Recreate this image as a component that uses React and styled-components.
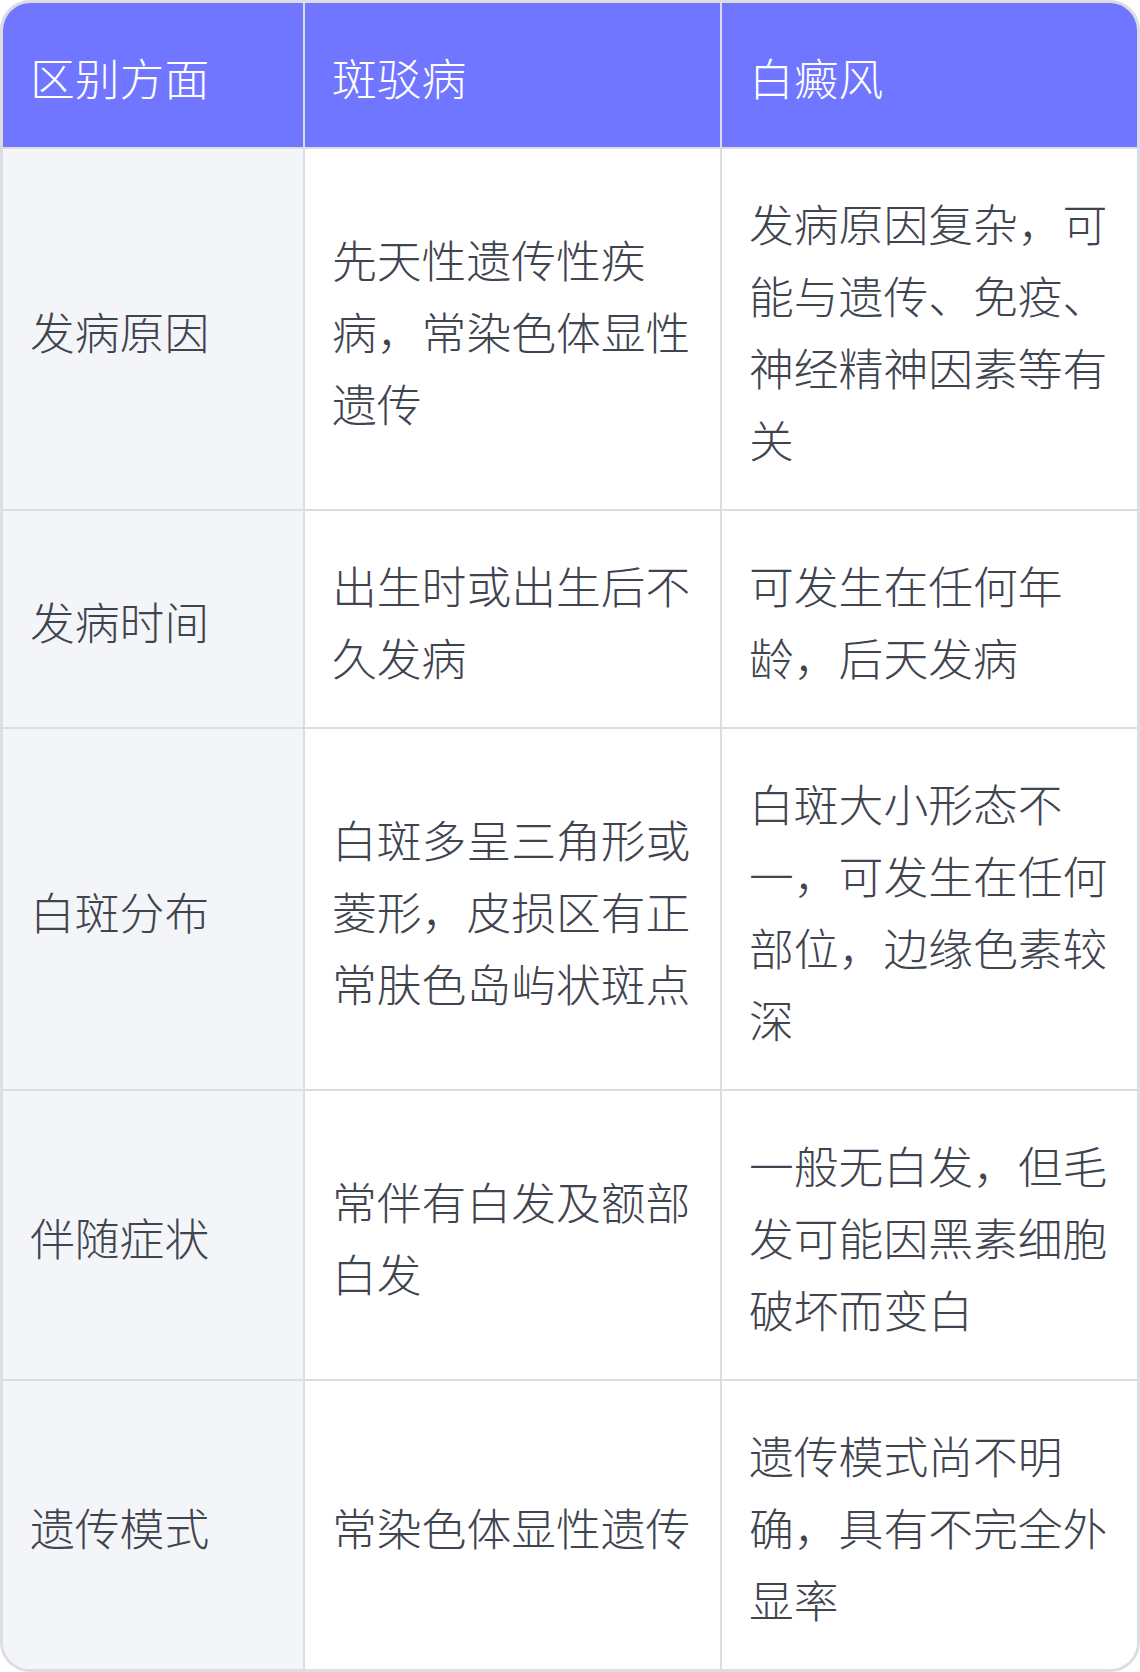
import styled, { createGlobalStyle } from 'styled-components'

const rows = [
  ['发病原因', '先天性遗传性疾病，常染色体显性遗传', '发病原因复杂，可能与遗传、免疫、神经精神因素等有关'],
  ['发病时间', '出生时或出生后不久发病', '可发生在任何年龄，后天发病'],
  ['白斑分布', '白斑多呈三角形或菱形，皮损区有正常肤色岛屿状斑点', '白斑大小形态不一，可发生在任何部位，边缘色素较深'],
  ['伴随症状', '常伴有白发及额部白发', '一般无白发，但毛发可能因黑素细胞破坏而变白'],
  ['遗传模式', '常染色体显性遗传', '遗传模式尚不明确，具有不完全外显率'],
]

const GlobalStyle = createGlobalStyle`
  body {
    margin: 0;
    background: #ffffff;
    font-family: "Noto Sans CJK SC", "Noto Sans", sans-serif;
  }
`

export default function App() {
  return (
    <>
      <GlobalStyle />
      <Frame>
        <Table>
          <colgroup>
            <col style={{ width: 302 }} />
            <col style={{ width: 417 }} />
            <col />
          </colgroup>
          <thead>
            <tr>
              <HeadCell>区别方面</HeadCell>
              <HeadCell>斑驳病</HeadCell>
              <HeadCell>白癜风</HeadCell>
            </tr>
          </thead>
          <tbody>
            {rows.map(([aspect, piebald, vitiligo]) => (
              <tr key={aspect}>
                <Cell $label>{aspect}</Cell>
                <Cell>{piebald}</Cell>
                <Cell>{vitiligo}</Cell>
              </tr>
            ))}
          </tbody>
        </Table>
      </Frame>
    </>
  )
}

const Frame = styled.div`
  width: 1140px;
  box-sizing: border-box;
  border: 3px solid #dcdde2;
  border-radius: 30px;
  overflow: hidden;
  background: #ffffff;
`
const Table = styled.table`
  width: 100%;
  table-layout: fixed;
  border-collapse: separate;
  border-spacing: 0;
`
const HeadCell = styled.th`
  background: #7076ff;
  color: #ffffff;
  font-size: 44.8px;
  font-weight: 300;
  line-height: 72px;
  text-align: left;
  padding: 38px 27px 34px;
  border-bottom: 2px solid #dcdde2;
  border-right: 2px solid #dcdde2;
  &:last-child {
    border-right: none;
  }
`
const Cell = styled.td`
  background: ${({ $label }) => ($label ? '#f4f5f9' : '#ffffff')};
  color: #40444f;
  font-size: 44.8px;
  font-weight: 300;
  line-height: 72px;
  text-align: left;
  vertical-align: middle;
  padding: 38px 27px 34px;
  border-bottom: 2px solid #dcdde2;
  border-right: 2px solid #dcdde2;
  &:last-child {
    border-right: none;
  }
  tr:last-child > & {
    border-bottom: none;
  }
`
